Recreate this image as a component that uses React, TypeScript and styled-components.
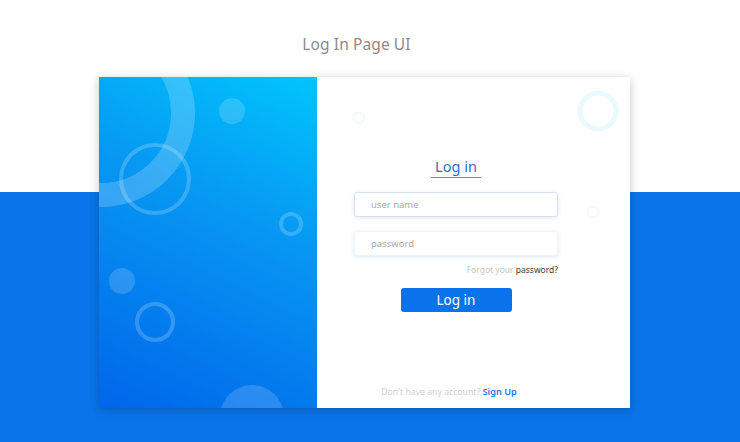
import styled, { createGlobalStyle } from "styled-components";

const GlobalStyle = createGlobalStyle`
  html, body {
    margin: 0;
    padding: 0;
  }
  body {
    width: 740px;
    height: 442px;
    overflow: hidden;
    font-family: "Noto Sans", "Liberation Sans", sans-serif;
    background: linear-gradient(to bottom, #ffffff 0, #ffffff 192px, #0a74e9 192px, #0a74e9 100%);
  }
`;

const Page = styled.main`
  display: flex;
  flex-direction: column;
  align-items: center;
  height: 442px;
`;

const Title = styled.h1`
  margin: 34px 0 0 -27px;
  font-size: 15.5px;
  line-height: 20px;
  font-weight: 400;
  color: #8b8b8b;
  letter-spacing: 0.1px;
`;

const Card = styled.section`
  display: flex;
  width: 531px;
  height: 331px;
  margin: 23px 0 0 -11px;
  background: #ffffff;
  box-shadow: 0 2px 9px rgba(0, 0, 0, 0.22);
`;

const ArtPanel = styled.div`
  width: 218px;
  height: 100%;
  flex-shrink: 0;
  background: linear-gradient(205deg, #00c5fc 0%, #0798f3 40%, #0066ea 100%);
  svg {
    display: block;
  }
`;

const FormPanel = styled.div`
  position: relative;
  flex: 1;
  overflow: hidden;
  padding-left: 37px;
`;

const Decor = styled.svg`
  position: absolute;
  left: 0;
  top: 0;
  pointer-events: none;
`;

const Form = styled.form`
  position: relative;
  display: flex;
  flex-direction: column;
  width: 204px;
  height: 100%;
  padding-top: 80px;
  box-sizing: border-box;
`;

const Heading = styled.h2`
  align-self: center;
  width: 50px;
  margin: 0;
  padding-bottom: 1px;
  border-bottom: 1.5px solid #4a8ade;
  text-align: center;
  font-size: 14.5px;
  line-height: 19px;
  font-weight: 400;
  color: #2d6fc4;
`;

const Field = styled.input<{ $outlined?: boolean }>`
  width: 204px;
  height: 25px;
  margin-top: 14px;
  box-sizing: border-box;
  padding: 0 16px;
  border: 1px solid ${(p) => (p.$outlined ? "#d6e1f0" : "#f1f4f8")};
  border-radius: 3px;
  background: #ffffff;
  box-shadow: 0 1px 4px rgba(120, 150, 190, 0.22);
  font-family: inherit;
  font-size: 9.5px;
  color: #555;
  outline: none;
  &::placeholder {
    color: #a9a9a9;
  }
`;

const Forgot = styled.p`
  align-self: flex-end;
  margin: 8px 0 0;
  font-size: 8.5px;
  line-height: 12px;
  color: #c6c6c6;
  b {
    font-weight: 400;
    color: #3b3b3b;
  }
`;

const Submit = styled.button`
  align-self: center;
  width: 111px;
  height: 24px;
  margin-top: 12px;
  border: none;
  border-radius: 3px;
  background: #0a72ea;
  color: #ffffff;
  font-family: inherit;
  font-size: 13.5px;
  line-height: 24px;
  padding: 0;
`;

const SignUp = styled.p`
  align-self: center;
  margin: auto 0 10px -14px;
  font-size: 8.7px;
  line-height: 12px;
  color: #cfcfcf;
  a {
    color: #2b78d8;
    font-weight: 600;
    font-size: 9.2px;
    text-decoration: none;
  }
`;

function Art() {
  const fill = "rgba(255,255,255,0.16)";
  const stroke = "rgba(255,255,255,0.2)";
  return (
    <svg width="218" height="331" viewBox="0 0 218 331">
      <circle cx="2" cy="36" r="82" fill="none" stroke={stroke} strokeWidth="24" />
      <circle cx="56" cy="102" r="34" fill="none" stroke={stroke} strokeWidth="4" />
      <circle cx="133" cy="34" r="13" fill={fill} />
      <circle cx="192" cy="147" r="10" fill="none" stroke={stroke} strokeWidth="4" />
      <circle cx="23" cy="204" r="13" fill={fill} />
      <circle cx="56" cy="245" r="18" fill="none" stroke={stroke} strokeWidth="4" />
      <circle cx="153" cy="340" r="32" fill={fill} />
    </svg>
  );
}

function FormDecor() {
  return (
    <Decor width="313" height="331" viewBox="0 0 313 331">
      <circle cx="281" cy="34" r="18" fill="none" stroke="#e8fafd" strokeWidth="5" />
      <circle cx="42" cy="41" r="5.5" fill="none" stroke="#f0f9fd" strokeWidth="2" />
      <circle cx="276" cy="135" r="5.5" fill="none" stroke="#f0f9fd" strokeWidth="2" />
    </Decor>
  );
}

export default function App() {
  return (
    <Page>
      <GlobalStyle />
      <Title>Log In Page UI</Title>
      <Card>
        <ArtPanel>
          <Art />
        </ArtPanel>
        <FormPanel>
          <FormDecor />
          <Form onSubmit={(e) => e.preventDefault()}>
            <Heading>Log in</Heading>
            <Field type="text" placeholder="user name" $outlined />
            <Field type="password" placeholder="password" />
            <Forgot>
              Forgot your <b>password?</b>
            </Forgot>
            <Submit type="submit">Log in</Submit>
            <SignUp>
              Don't have any account? <a href="#">Sign Up</a>
            </SignUp>
          </Form>
        </FormPanel>
      </Card>
    </Page>
  );
}
